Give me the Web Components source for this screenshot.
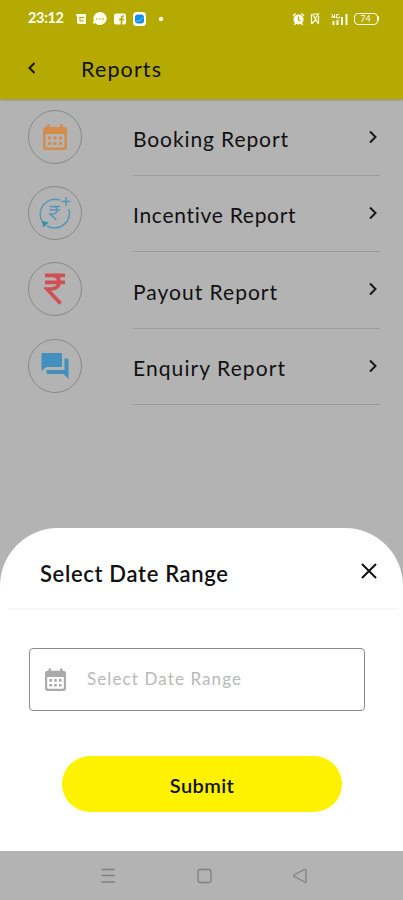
<!DOCTYPE html>
<html lang="en"><head><meta charset="utf-8"><title>Reports</title>
<style>body{margin:0;width:403px;height:900px;overflow:hidden;background:#b3b3b3;color:#111;font-family:Lato,"Noto Sans",sans-serif}</style></head>
<body>
<reports-screen></reports-screen>
<script>
const define=(name,html,setup)=>{
  const t=document.createElement('template');t.innerHTML=html;
  customElements.define(name,class extends HTMLElement{
    connectedCallback(){
      if(this.shadowRoot)return;
      this.attachShadow({mode:'open'}).append(t.content.cloneNode(true));
      if(setup)setup(this,this.shadowRoot);
    }
  });
};

/* Single line of text, tracked so that it spans the width in its "span" attribute. */
define('tracked-text',`<style>:host{display:block;white-space:nowrap;line-height:1}span{display:inline-block}</style><span><slot></slot></span>`,(el,r)=>{
  const s=r.querySelector('span'),n=el.textContent.length;
  s.style.letterSpacing=(+el.getAttribute('span')-s.getBoundingClientRect().width)/(n-1)+'px';
  s.style.marginRight='-2px';
});

const icons={
 calendar:`<svg viewBox="0 0 24 26" width="24" height="26" fill="currentColor"><path fill-rule="evenodd" d="M3 3H4V1Q5.500-1 7 1V3H17V1Q18.500-1 20 1V3H21Q24 3 24 6V23Q24 26 21 26H3Q0 26 0 23V6Q0 3 3 3ZM2.500 10V22Q2.500 23.500 4 23.500H20Q21.500 23.500 21.500 22V10Z"/><path d="M5 12.500h3v3H5zm5.500 0h3v3h-3zm5.500 0h3v3h-3zM5 18h3v3H5zm5.500 0h3v3h-3zm5.500 0h3v3h-3z"/></svg>`,
 incentive:`<svg viewBox="0 0 34 34" width="34" height="34" fill="none" stroke="currentColor" stroke-width="1.500"><path d="M22 4A15 15 0 0 0 5 27M31 13A15 15 0 0 1 9 30M28 1V10M23.500 5.500H32.500M11.500 10.500H22M11.500 14H22M12 10.500H15Q19 10.500 19 14T15 18H12L18.500 24"/><path d="M4.500 25.500L10 26.500L5.500 31Z" fill="#2c93a8" stroke="#2c93a8" stroke-width=".8"/></svg>`,
 rupee:`<svg viewBox="0 0 22 34" width="22" height="34" fill="none" stroke="currentColor" stroke-width="3.700"><path d="M1 3.400H21M1 10.400H21M2 3.400H8Q15 3.400 15 10T7 17H3L16.500 31.500"/></svg>`,
 chat:`<svg viewBox="0 0 28 28" width="28" height="28" fill="currentColor"><path d="M1.500 1H20Q21 1 21 2V14Q21 15 20 15H5.500L.5 19V2Q.5 1 1.500 1ZM23.500 6.500H26Q27.500 6.500 27.500 8V27L22.500 22H7Q5.500 22 5.500 20.500V18H23.500Z"/></svg>`
};

define('status-bar',`<style>:host{display:flex;height:37px;padding:0 24px 0 28px;align-items:center;color:#fffef0;box-sizing:border-box}
.l{display:flex;align-items:center;flex:1;font:700 14.500px/16px Lato,sans-serif}.r{display:flex;align-items:center}svg{display:block}
.bat{width:22px;height:10px;border:1px solid;border-radius:4px;font:9px/10px Lato,sans-serif;text-align:center}.cap{width:1.500px;height:5px;background:currentColor;border-radius:0 2px 2px 0}</style>
<div class="l"><tracked-text span="36">23:12</tracked-text>
<svg width="92" height="16" viewBox="0 0 92 16" style="margin-left:13.500px"><g fill="#fffef0"><path d="M1 3H11V12Q11 13 10 13H4Q2 13 2 11V6Z"/><path d="M25 1a6.800 6.500 0 1 1-5 11L18 13l.6-4A6.800 6.500 0 0 1 25 1Z"/><rect x="39" y="2.500" width="12" height="11" rx="2"/><rect x="58" y="1" width="13" height="14" rx="3.500"/><circle cx="86" cy="8" r="2.200"/></g><g fill="none" stroke="#b5aa02"><path d="M4 6.500H9.500M5 6V10H8V8.500"/><path d="M21 8h1.500m1.500 0h1.500m1.500 0h2" stroke-width="1.200"/><path d="M46.500 14V7Q46.500 5 49 5M44 8.500H49" stroke-width="1.700"/></g><rect x="60" y="3.500" width="9" height="9" rx="3" fill="#168ee8"/><path d="M61 10Q66 11 68 6" stroke="#55c8ff" fill="none"/></svg></div>
<div class="r"><svg width="59" height="16" viewBox="0 0 59 16" style="margin-right:2px"><g transform="translate(-1.500 0)"><circle cx="7" cy="8.500" r="5" fill="#fffef0"/><path d="M1.500 5L4 2.500M10 2.500L12.500 5M4 12L3 14M10 12L11 14" stroke="#fffef0" stroke-width="1.500"/><path d="M7 5.500V9L9 10" fill="none" stroke="#b5aa02" stroke-width="1.200"/><path d="M20 3V13M21 3L27 13M20 13L25 8M22 3H27L23 8M27 5V13" fill="none" stroke="#fffef0" stroke-width="1.200"/><path d="M42 10V14M46 9V14M50.500 6V14M55 3V14" stroke="#fffef0" stroke-width="2"/><path d="M40 3L43 7V3M39.500 6H44M47.500 3.500H45V7H48V5.500" fill="none" stroke="#fffef0"/></g></svg><div class="bat">74</div><div class="cap"></div></div>`);

define('app-header',`<style>:host{display:block;height:99px;background:#b5aa02;box-shadow:0 1px 2px #8f8e65}.bar{display:flex;align-items:center;height:62px;padding-left:27px}tracked-text{font-size:21.500px;margin:3px 0 0 44px}</style>
<status-bar></status-bar><div class="bar"><svg width="10" height="14" viewBox="0 0 10 14" style="margin-top:-1px"><path d="M7.500 2L2.500 7L7.500 12" fill="none" stroke="#161600" stroke-width="2"/></svg><tracked-text span="80">Reports</tracked-text></div>`);

define('report-row',`<style>:host{display:grid;grid-template-columns:105px 247px;height:76.330px;padding-left:28px}
.ring{width:52px;height:52px;border:1px solid #898989;border-radius:50%;display:grid;place-items:center;margin-top:10px;color:var(--tone)}.ring svg{display:block}
.body{display:flex;justify-content:space-between;border-bottom:1px solid #9b9b9b;box-sizing:border-box}tracked-text{font-size:21px;margin-top:28.200px}.go{margin:29px 2px 0}</style>
<div class="ring"></div><div class="body"><div class="text"></div><svg class="go" width="10" height="16" viewBox="0 0 10 16"><path d="M2 2.500L7.500 8L2 13.500" fill="none" stroke="#191919" stroke-width="2"/></svg></div>`,(el,r)=>{
  r.querySelector('.ring').innerHTML=icons[el.getAttribute('icon')];
  const t=document.createElement('tracked-text');t.textContent=el.getAttribute('label');t.setAttribute('span',el.getAttribute('span'));
  r.querySelector('.text').append(t);
});

define('date-field',`<style>:host{display:flex;align-items:center;box-sizing:border-box;width:336px;height:63px;border:1px solid #8b8b8b;border-radius:4px;padding-left:15px;color:#aaa}svg{display:block;width:21px;height:23px}tracked-text{font-size:17px;margin:-3px 0 0 21.500px;color:#b9b9b9}</style><div class="i"></div><tracked-text span="154">Select Date Range</tracked-text>`,(el,r)=>{r.querySelector('.i').innerHTML=icons.calendar});

define('submit-button',`<style>:host{display:block}button{all:unset;display:grid;place-items:center;width:280px;height:56px;border-radius:28px;background:#fff200;color:#111;font-size:20px;font-weight:600}tracked-text{margin:2px 2px 0 0}</style><button><tracked-text span="64">Submit</tracked-text></button>`);

define('date-sheet',`<style>:host{display:block;height:323px;background:#fff;border-radius:58px 58px 0 0;overflow:hidden}
header{display:flex;justify-content:space-between;height:81px;margin:0 5px 0 8px;border-bottom:1px solid #f3f3f3;box-sizing:border-box;padding:0 20px 0 32px}
header tracked-text{font-size:22px;font-weight:600;margin-top:34.500px}header svg{margin-top:34px}date-field{margin:39px 0 0 28.500px}submit-button{margin:45px 0 0 62px}</style>
<header><tracked-text span="188">Select Date Range</tracked-text><svg width="18" height="18" viewBox="0 0 18 18"><path d="M2 2L16 16M16 2L2 16" stroke="#111" stroke-width="2"/></svg></header><date-field></date-field><submit-button></submit-button>`);

define('system-nav',`<style>:host{display:flex;height:49px;background:#b3b3b3;justify-content:center}svg{display:block}</style><svg width="403" height="49" fill="none" stroke="#818181" stroke-width="1.300"><path d="M101.500 18.500H115M101.500 24.500H115M101.500 31H115"/><rect x="198" y="18.500" width="13" height="13" rx="2.500"/><path d="M294.500 23.500L304.500 18.500Q306 18 306 19.500V30.500Q306 32 304.500 31L294.500 25.500Q293 24.500 294.500 23.500Z"/></svg>`);

define('reports-screen',`<style>:host{display:flex;flex-direction:column;width:403px;height:900px;background:#b3b3b3}main{flex:1;min-height:0;padding-top:.700px}</style>
<app-header></app-header><main>
<report-row icon="calendar" label="Booking Report" span="155" style="--tone:#d58c4b"></report-row>
<report-row icon="incentive" label="Incentive Report" span="163" style="--tone:#5596bb"></report-row>
<report-row icon="rupee" label="Payout Report" span="144" style="--tone:#d05055"></report-row>
<report-row icon="chat" label="Enquiry Report" span="152" style="--tone:#4490bd"></report-row>
</main><date-sheet></date-sheet><system-nav></system-nav>`);
</script></body></html>
